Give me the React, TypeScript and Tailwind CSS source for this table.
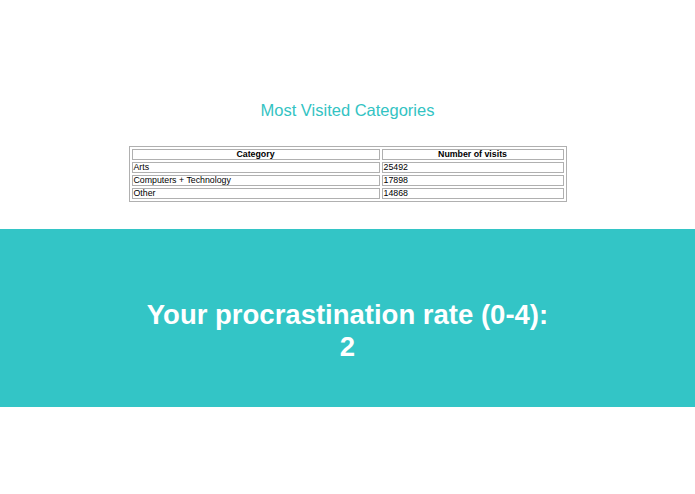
import React from "react";

const rows = [
  ["Arts", "25492"],
  ["Computers + Technology", "17898"],
  ["Other", "14868"],
];

export default function App() {
  return (
    <div className="w-[695px] h-[494px] bg-white flex flex-col" style={{ fontFamily: '"Liberation Sans", Arial, sans-serif' }}>
      <div className="h-[229px] flex flex-col items-center">
        <h1 className="mt-[100px] text-[16.5px] leading-[20px] text-[#33c3c3] font-normal">Most Visited Categories</h1>
        <table className="mt-[26px] w-[438px] border border-[#b0b0b0] border-separate border-spacing-[2px] text-[8.8px] leading-[9px] text-black">
          <thead>
            <tr>
              <th className="border border-[#b0b0b0] px-px py-0 font-bold text-center w-[248px]">Category</th>
              <th className="border border-[#b0b0b0] px-px py-0 font-bold text-center">Number of visits</th>
            </tr>
          </thead>
          <tbody>
            {rows.map((r) => (
              <tr key={r[0]}>
                <td className="border border-[#b0b0b0] px-px py-0 text-left">{r[0]}</td>
                <td className="border border-[#b0b0b0] px-px py-0 text-left">{r[1]}</td>
              </tr>
            ))}
          </tbody>
        </table>
      </div>
      <div className="h-[178px] bg-[#33c5c6] flex flex-col items-center pt-[70px] text-white font-bold text-[27.5px] leading-[32px] text-center">
        <div>Your procrastination rate (0-4):</div>
        <div>2</div>
      </div>
    </div>
  );
}
